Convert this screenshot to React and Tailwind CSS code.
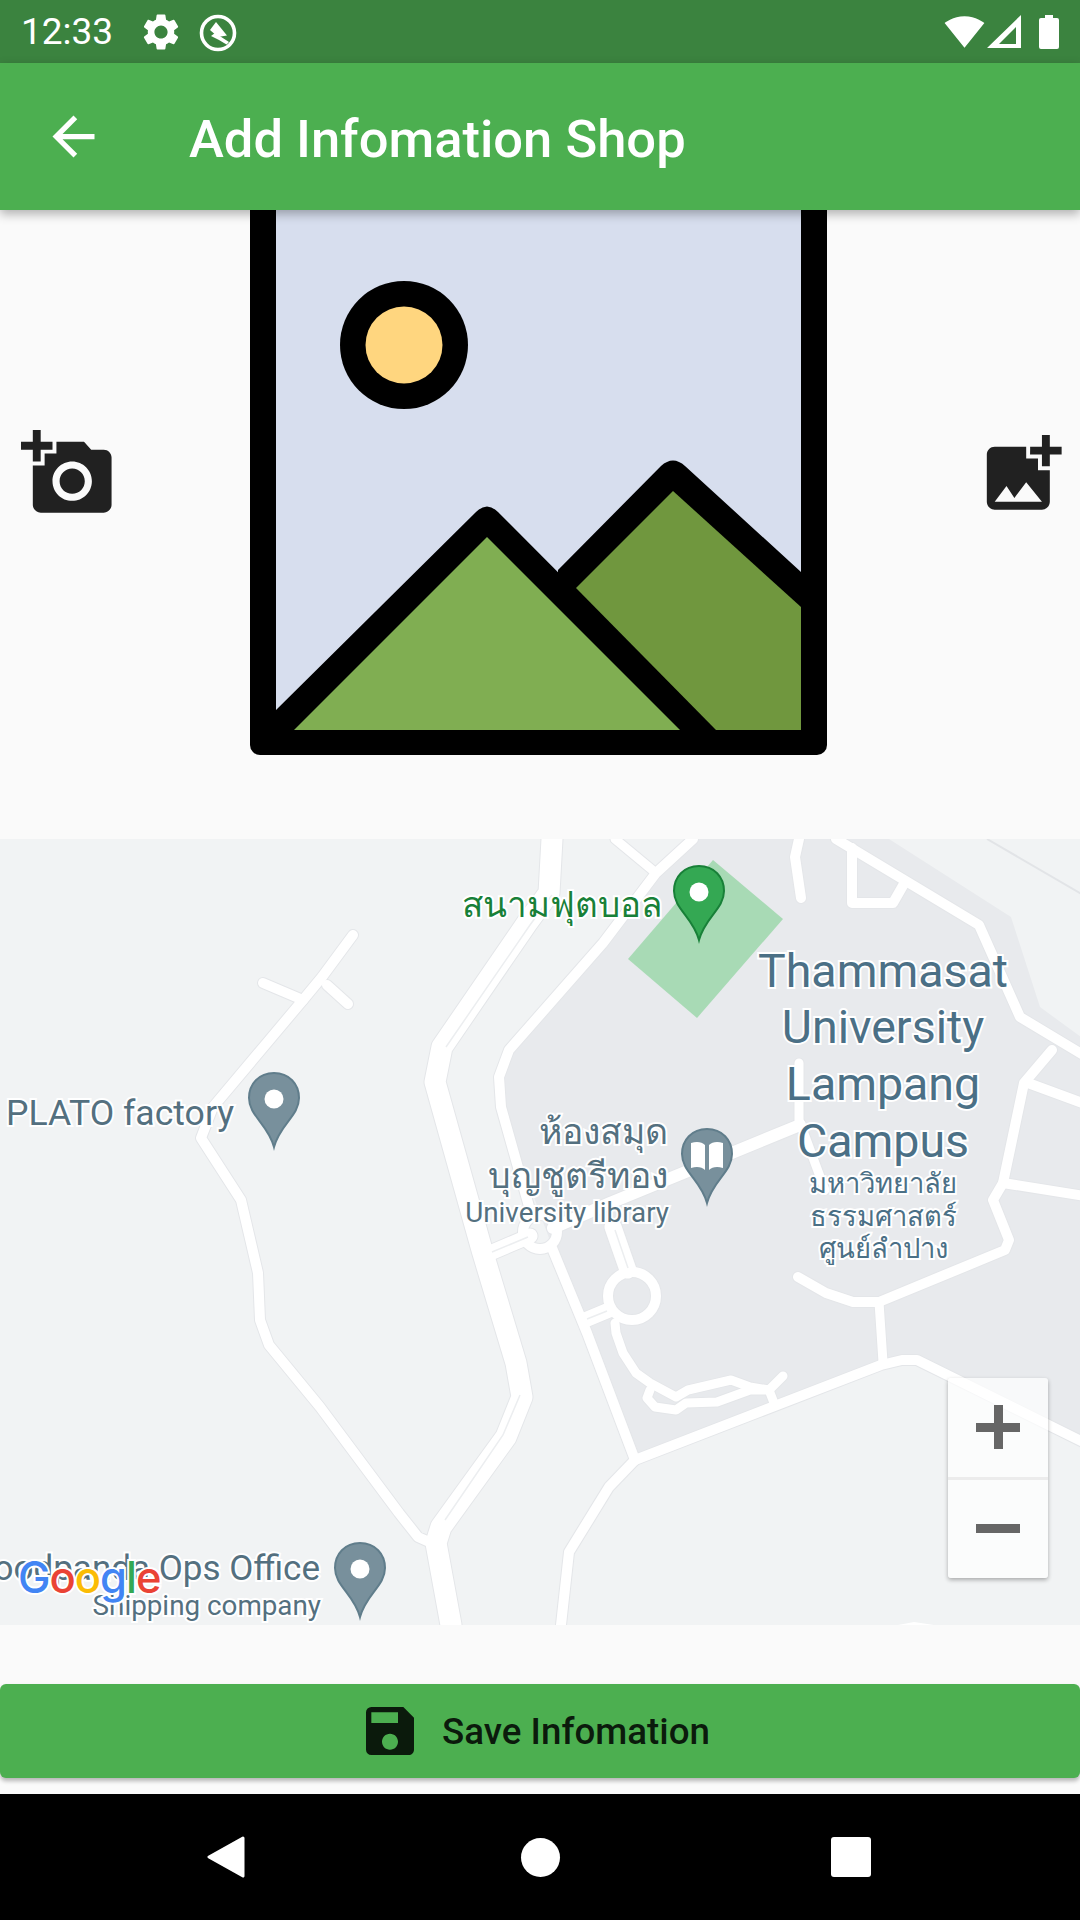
import { MdAddAPhoto, MdAddPhotoAlternate, MdArrowBack, MdSave, MdSettings, MdSignalWifi4Bar } from 'react-icons/md';

const casing = '#e4e6e9';

// road polylines, in page coordinates (the map svg viewBox starts at y=839)
const roads = [
  { w: 10, d: 'M353 935 L322 977 L303 1000 L213 1107 L201 1138 L241 1200 L258 1273 L260 1320 L269 1345 L320 1407 L399 1513 L418 1537 L436 1545' },
  { w: 10, d: 'M263 983 L303 1000' },
  { w: 10, d: 'M327 985 L348 1004' },
  { w: 21, d: 'M552 839 L549 893 L527 923 L442 1047 L435 1082 L482 1250 L516 1363 L522 1397 L506 1437 L441 1527 L436 1543 L451 1625' },
  { w: 10, d: 'M693 839 L656 873 L603 943 L509 1050 L499 1077 L501 1107 L530 1210' },
  { w: 9, d: 'M615 839 L656 873' },
  { w: 10, d: 'M552 1248 L587 1333 L635 1460' },
  { w: 10, d: 'M635 1460 L881 1365 L902 1360 L917 1360 L1085 1443' },
  { w: 10, d: 'M635 1460 L609 1487 L569 1552 L561 1625' },
  { w: 15, d: 'M490 1253 L530 1236' },
  { w: 12, d: 'M553 1228 L610 1203 L800 1125' },
  { w: 9, d: 'M799 1063 L799 1120 L825 1190' },
  { w: 10, d: 'M836 839 L979 925 L1020 1017 L1085 1056' },
  { w: 10, d: 'M799 839 L795 857 L801 898' },
  { w: 10, d: 'M852 848 L852 903 L893 903 L905 882' },
  { w: 10, d: 'M1052 1050 L1024 1083 L1003 1183 L993 1200 L1009 1240 L1005 1250 L879 1302 L853 1302 L826 1293 L798 1277' },
  { w: 10, d: 'M1028 1083 L1085 1104' },
  { w: 10, d: 'M1003 1183 L1085 1196' },
  { w: 9, d: 'M879 1302 L883 1362' },
  // lanes joining the big roundabout
  { w: 17, d: 'M613 1227 L628 1270' },
  { w: 15, d: 'M585 1320 L609 1310' },
  // lower loop behind the campus
  { w: 9, d: 'M615 1323 L616 1333 L623 1353 L636 1373 L650 1383 L676 1397 L688 1390 L731 1380 L750 1387 L769 1390 L783 1376' },
  { w: 9, d: 'M650 1390 L647 1398 L655 1407 L676 1410 L686 1403 L717 1402 L750 1390 L769 1390 L774 1403' },
];

const laneLines = ['M492 1252 L528 1237', 'M615 1230 L628 1268', 'M587 1319 L607 1311', 'M552 895 L530 925 L446 1047', 'M520 1395 L503 1435 L445 1520'];

const Pin = ({ x, y, fill = '#78909c', edge = '#607d8b', book = false }) => (
  <g transform={`translate(${x} ${y})`}>
    <path
      d="M0 1 C15 1 25 12 25 26 C25 44 6 52 0 75 C-6 52 -25 44 -25 26 C-25 12 -15 1 0 1 Z"
      fill={fill}
      stroke={edge}
      strokeWidth="2"
    />
    {book ? (
      <path d="M-16 15 C-10 13 -5 14 -2 17 V42 C-5 39 -10 38 -16 40 Z M16 15 C10 13 5 14 2 17 V42 C5 39 10 38 16 40 Z" fill="#fff" />
    ) : (
      <circle cx="0" cy="27" r="9.5" fill="#fff" />
    )}
  </g>
);

// label on the map, white halo behind the glyphs
const haloClass = "absolute whitespace-nowrap leading-none font-['Roboto','Noto_Sans','DejaVu_Sans',sans-serif] [paint-order:stroke_fill] [-webkit-text-stroke:4px_#ffffff]";

const MapView = () => (
  <div className="relative h-[786px] overflow-hidden bg-[#f1f3f4]">
    <svg viewBox="0 839 1080 786" className="block w-full h-full">
      <path
        d="M693 839 L889 839 L1011 917 L1040 1007 L1085 1040 L1085 1443 L917 1360 L881 1365 L635 1460 L557 1260 L501 1107 L499 1077 L509 1050 L603 943 L656 873 Z"
        fill="#e8eaed"
      />
      <path d="M713 860 L783 919 L697 1018 L628 959 Z" fill="#a8dab5" />
      <path d="M987 839 L1085 896" fill="none" stroke="#e2e4e7" strokeWidth="2" />
      <path d="M898 1625 L914 1622 L934 1625 Z" fill="#fff" />
      {roads.map((r, i) => (
        <path key={i} d={r.d} fill="none" stroke={casing} strokeWidth={r.w + 2} strokeLinecap="round" strokeLinejoin="round" />
      ))}
      <circle cx="540" cy="1232" r="17" fill="none" stroke={casing} strokeWidth="12" />
      <circle cx="632" cy="1296" r="24" fill="none" stroke={casing} strokeWidth="12" />
      {roads.map((r, i) => (
        <path key={i} d={r.d} fill="none" stroke="#fff" strokeWidth={r.w} strokeLinecap="round" strokeLinejoin="round" />
      ))}
      <circle cx="540" cy="1232" r="17" fill="none" stroke="#fff" strokeWidth="10" />
      <circle cx="632" cy="1296" r="24" fill="none" stroke="#fff" strokeWidth="10" />
      {laneLines.map((d, i) => (
        <path key={i} d={d} fill="none" stroke="#eceef0" strokeWidth="1.5" />
      ))}
      <Pin x={699} y={865} fill="#34a853" edge="#188038" />
      <Pin x={274} y={1072} />
      <Pin x={707} y={1128} book />
      <Pin x={360} y={1542} />
    </svg>

    <span className={`${haloClass} left-[462px] top-[49px] text-[35px] text-[#188038]`}>สนามฟุตบอล</span>

    <div className="absolute left-[733px] top-[104px] w-[300px] flex flex-col items-center text-[#4b7086]">
      <span className="relative h-[56px] w-full text-center">
        <span className={`${haloClass} inset-x-0 top-[5px] text-[46.5px]`}>Thammasat</span>
      </span>
      <span className="relative h-[57px] w-full text-center">
        <span className={`${haloClass} inset-x-0 top-[5px] text-[46.5px]`}>University</span>
      </span>
      <span className="relative h-[57px] w-full text-center">
        <span className={`${haloClass} inset-x-0 top-[5px] text-[46.5px]`}>Lampang</span>
      </span>
      <span className="relative h-[56px] w-full text-center">
        <span className={`${haloClass} inset-x-0 top-[5px] text-[46.5px]`}>Campus</span>
      </span>
    </div>

    <span className={`${haloClass} left-[6px] top-[257px] text-[35.6px] text-[#54707f]`}>PLATO factory</span>

    <span className={`${haloClass} right-[412px] top-[276px] text-[35.5px] text-[#54707f]`}>ห้องสมุด</span>
    <span className={`${haloClass} right-[412px] top-[320px] text-[35.5px] text-[#54707f]`}>บุญชูตรีทอง</span>
    <span className={`${haloClass} right-[411px] top-[360px] text-[27.8px] text-[#54707f]`}>University library</span>

    <div className="absolute left-[733px] top-[332px] w-[300px] text-center text-[27.4px] text-[#4b7086]">
      <span className={`${haloClass} inset-x-0 top-0`}>มหาวิทยาลัย</span>
      <span className={`${haloClass} inset-x-0 top-[33px]`}>ธรรมศาสตร์</span>
      <span className={`${haloClass} inset-x-0 top-[65px]`}>ศูนย์ลำปาง</span>
    </div>

    <span className={`${haloClass} right-[760px] top-[712px] text-[35px] text-[#54707f]`}>Foodpanda Ops Office</span>
    <span className={`${haloClass} right-[759px] top-[753px] text-[27.8px] text-[#54707f]`}>Shipping company</span>

    <div className="absolute left-[18px] top-[717px] text-[43.5px] font-medium leading-none tracking-[-1px] font-['Inter',sans-serif] [paint-order:stroke_fill] [-webkit-text-stroke:4px_#ffffff]">
      <span className="text-[#4285f4]">G</span>
      <span className="text-[#ea4335]">o</span>
      <span className="text-[#fbbc05]">o</span>
      <span className="text-[#4285f4]">g</span>
      <span className="text-[#34a853]">l</span>
      <span className="text-[#ea4335]">e</span>
    </div>

    <div className="absolute right-[32px] bottom-[47px] w-[100px] h-[200px] flex flex-col rounded-[3px] bg-white/70 shadow-[0_2px_4px_rgba(0,0,0,0.3)]">
      <div className="flex-1 flex items-center justify-center">
        <div className="relative w-[44px] h-[44px]">
          <div className="absolute left-0 top-[18px] w-[44px] h-[9px] bg-[#666666]" />
          <div className="absolute left-[18px] top-0 w-[9px] h-[44px] bg-[#666666]" />
        </div>
      </div>
      <div className="h-[3px] bg-[#ececec]" />
      <div className="flex-1 flex items-center justify-center">
        <div className="w-[44px] h-[9px] bg-[#666666]" />
      </div>
    </div>
  </div>
);

const App = () => {
  return (
    <div className="w-[1080px] h-[1920px] flex flex-col overflow-hidden bg-[#fafafa] font-['Roboto',sans-serif]">
      <div className="h-[63px] shrink-0 flex items-center bg-[#3b833f] text-white">
        <span className="ml-[21px] w-[94px] text-[37px] leading-none">12:33</span>
        <MdSettings size={44} className="ml-[24px]" />
        <svg viewBox="0 0 40 40" className="ml-[15px] mt-[3px] w-[40px] h-[40px]" fill="none">
          <circle cx="20" cy="20" r="16.5" stroke="#fff" strokeWidth="3.6" />
          <path d="M18 9 L29 22.5 L20 24 L12 17 Z" fill="#fff" />
          <path d="M13 23 L17 20 L31 29 L28.5 31.5 L21 27 Z" fill="#fff" />
        </svg>
        <MdSignalWifi4Bar size={41} className="ml-auto" />
        <svg viewBox="0 0 34 33" className="ml-[2px] w-[34px] h-[33px]">
          <path d="M34 0 L0 33 H34 Z M29 12 V29 H12 Z" fill="#fff" fillRule="evenodd" />
        </svg>
        <svg viewBox="0 0 20 34" className="ml-[18px] mr-[21px] w-[20px] h-[34px]">
          <path d="M6 0 H14 V3 H18 A2 2 0 0 1 20 5 V32 A2 2 0 0 1 18 34 H2 A2 2 0 0 1 0 32 V5 A2 2 0 0 1 2 3 H6 Z" fill="#fff" />
        </svg>
      </div>

      <div className="relative z-10 h-[147px] shrink-0 flex items-center bg-[#4caf50] text-white shadow-[0_4px_10px_rgba(0,0,0,0.3)]">
        <MdArrowBack size={63} className="ml-[42px]" />
        <h1 className="ml-[84px] mt-[5px] text-[52.5px] font-medium leading-none">Add Infomation Shop</h1>
      </div>

      <div className="h-[629px] shrink-0 flex items-start overflow-hidden">
        <MdAddAPhoto size={94.5} className="ml-[21px] mt-[216px] shrink-0 text-[#212121]" />
        <svg viewBox="250 210 577 545" className="ml-[134.5px] w-[577px] h-[545px] shrink-0">
          <path d="M250 200 H827 V745 A10 10 0 0 1 817 755 H260 A10 10 0 0 1 250 745 Z" fill="#000" />
          <rect x="276" y="200" width="525" height="530" fill="#d7deee" />
          <circle cx="404" cy="345" r="64" fill="#000" />
          <circle cx="404" cy="345" r="38.5" fill="#ffd67f" />
          <path d="M558 570 L661 466 Q673 455 685 466 L801 572 V735 H558 Z" fill="#000" />
          <path d="M673 491 L801 607 V730 H716 L576 588 Z" fill="#70973e" />
          <path d="M276 710 L476 512 Q487 501 498 512 L720 735 H276 Z" fill="#000" />
          <path d="M487 537 L680 730 H294 Z" fill="#80ae52" />
        </svg>
        <MdAddPhotoAlternate size={94.5} className="ml-[147.5px] mt-[217px] shrink-0 text-[#212121]" />
      </div>

      <MapView />

      <button className="mt-[59px] h-[94px] shrink-0 flex items-center rounded-[6px] bg-[#4caf50] text-black/85 shadow-[0_3px_4px_rgba(0,0,0,0.28)]">
        <MdSave size={64} className="ml-[358px]" />
        <span className="ml-[20px] mt-[3px] flex-1 text-left text-[36.75px] font-medium leading-none">Save Infomation</span>
      </button>

      <div className="mt-[16px] flex-1 flex items-center bg-black">
        <svg viewBox="0 0 40 42" className="ml-[205px] w-[40px] h-[42px]">
          <path d="M38 2 L4 21 L38 40 Z" fill="#fff" stroke="#fff" strokeWidth="3" strokeLinejoin="round" />
        </svg>
        <div className="ml-[276px] w-[39px] h-[39px] rounded-full bg-white" />
        <div className="ml-[271px] w-[40px] h-[40px] rounded-[3px] bg-white" />
      </div>
    </div>
  );
};

export default App;
